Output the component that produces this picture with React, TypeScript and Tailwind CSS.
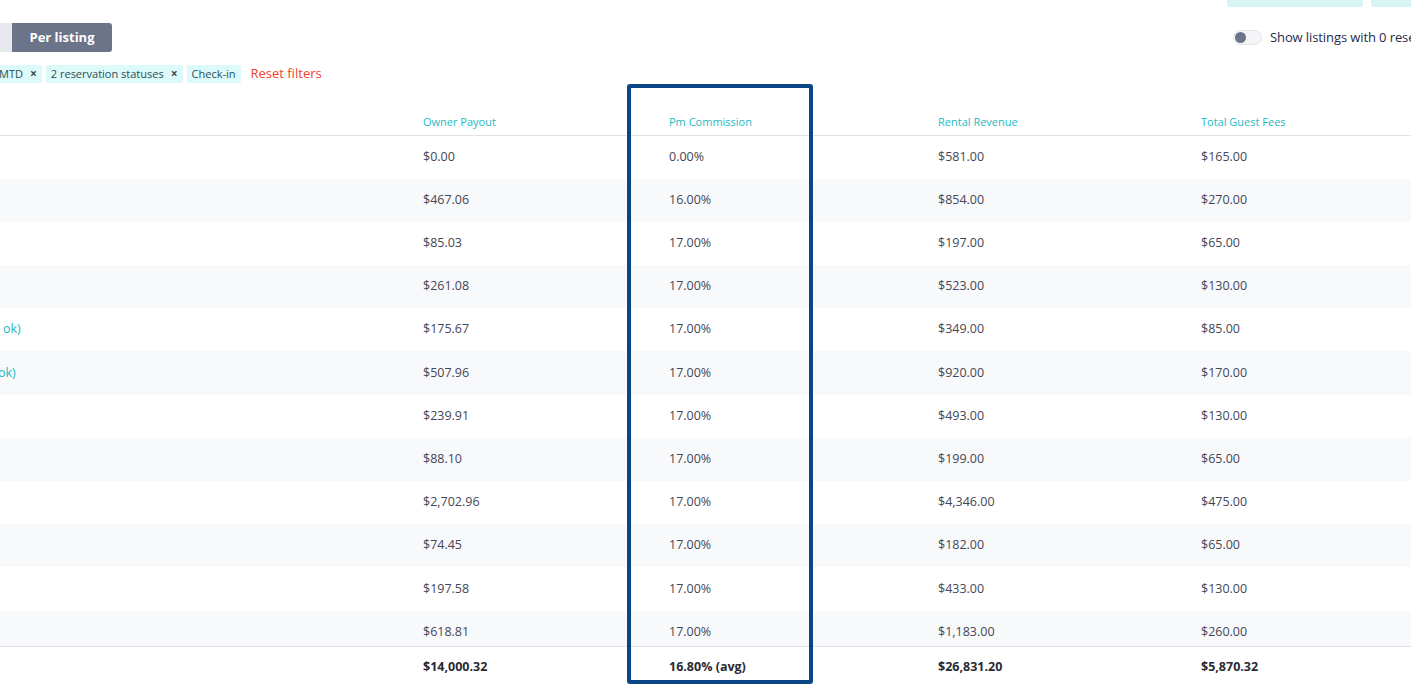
import React from "react";

type Row = {
  name?: React.ReactNode;
  owner: string;
  pm: string;
  rental: string;
  guest: string;
};

const ROWS: Row[] = [
  { owner: "$0.00", pm: "0.00%", rental: "$581.00", guest: "$165.00" },
  { owner: "$467.06", pm: "16.00%", rental: "$854.00", guest: "$270.00" },
  { owner: "$85.03", pm: "17.00%", rental: "$197.00", guest: "$65.00" },
  { owner: "$261.08", pm: "17.00%", rental: "$523.00", guest: "$130.00" },
  {
    name: <span className="-ml-[8px]">n ok)</span>,
    owner: "$175.67",
    pm: "17.00%",
    rental: "$349.00",
    guest: "$85.00",
  },
  {
    name: <span className="-ml-[2px]">ok)</span>,
    owner: "$507.96",
    pm: "17.00%",
    rental: "$920.00",
    guest: "$170.00",
  },
  { owner: "$239.91", pm: "17.00%", rental: "$493.00", guest: "$130.00" },
  { owner: "$88.10", pm: "17.00%", rental: "$199.00", guest: "$65.00" },
  { owner: "$2,702.96", pm: "17.00%", rental: "$4,346.00", guest: "$475.00" },
  { owner: "$74.45", pm: "17.00%", rental: "$182.00", guest: "$65.00" },
  { owner: "$197.58", pm: "17.00%", rental: "$433.00", guest: "$130.00" },
  { owner: "$618.81", pm: "17.00%", rental: "$1,183.00", guest: "$260.00" },
];

const GRID = "grid grid-cols-[423px_246px_269px_263px_1fr]";

const Chip = ({ label, removable, className = "" }: { label: string; removable?: boolean; className?: string }) => (
  <div className={`flex items-center h-[18px] px-[5px] gap-[7px] bg-[#dcfafa] text-[#2b4f57] text-[11px] rounded-[2px] ${className}`}>
    <span>{label}</span>
    {removable && <span className="text-[12px] font-bold leading-none text-[#3a4a55]">×</span>}
  </div>
);

export default function App() {
  return (
    <div className="relative w-full h-[685px] overflow-hidden bg-white font-['Open_Sans',sans-serif] text-[#464655]">
      {/* cut-off action buttons */}
      <div className="flex justify-end gap-2 h-[7px]">
        <div className="w-[136px] h-[7px] bg-[#d7f5f5] rounded-b-[3px]" />
        <div className="w-[40px] h-[7px] bg-[#d7f5f5] rounded-bl-[3px]" />
      </div>

      <div className="flex items-center mt-[16px] h-[29px]">
        <div className="w-[12px] h-[29px] bg-[#e8e9ee]" />
        <div className="w-[100px] h-[29px] flex items-center justify-center bg-[#6b7489] text-white text-[13px] font-bold rounded-r-[3px]">
          Per listing
        </div>
        <div className="ml-auto w-[178px] shrink-0 flex items-center gap-[8px] whitespace-nowrap">
          <div className="w-[29px] h-[15px] shrink-0 rounded-full bg-[#f5f5f8] border border-[#e4e4ec] flex items-center px-[1px]">
            <div className="w-[11px] h-[11px] rounded-full bg-[#6b7489]" />
          </div>
          <span className="text-[13px] tracking-[-0.1px] text-[#1f2b4d]">Show listings with 0 reservations</span>
        </div>
      </div>

      <div className="flex items-center gap-[4px] mt-[12px]">
        <Chip label="MTD" removable className="-ml-[6px]" />
        <Chip label="2 reservation statuses" removable />
        <Chip label="Check-in" />
        <span className="ml-[6px] text-[13px] text-[#ef4131]">Reset filters</span>
      </div>

      <div className={`${GRID} h-[52px] items-end pb-[4px] border-b border-[#e2e2e8] text-[11px] text-[#1db9c3]`}>
        <div />
        <div>Owner Payout</div>
        <div>Pm Commission</div>
        <div>Rental Revenue</div>
        <div>Total Guest Fees</div>
      </div>

      <div className="h-[510px] overflow-hidden">
        {ROWS.map((r, i) => (
          <div
            key={i}
            className={`${GRID} h-[43.2px] items-center text-[12.5px] ${i % 2 === 1 ? "bg-[#f8f9fb]" : "bg-white"}`}
          >
            <div className="overflow-hidden whitespace-nowrap text-[#1db9c3]">{r.name}</div>
            <div>{r.owner}</div>
            <div>{r.pm}</div>
            <div>{r.rental}</div>
            <div>{r.guest}</div>
          </div>
        ))}
      </div>

      <div className={`${GRID} h-[42px] items-center border-t border-[#e2e2e8] text-[12.5px] font-bold text-[#2a2a33]`}>
        <div />
        <div>$14,000.32</div>
        <div>16.80% (avg)</div>
        <div>$26,831.20</div>
        <div>$5,870.32</div>
      </div>

      {/* highlight annotation */}
      <div className="absolute left-[627px] top-[84px] w-[186px] h-[600px] border-4 border-[#0b4586] rounded-[3px] pointer-events-none" />
    </div>
  );
}
